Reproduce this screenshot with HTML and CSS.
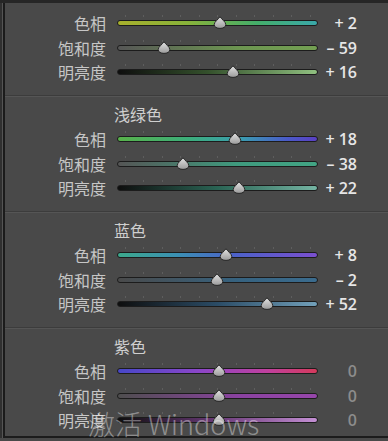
FILE: index.html
```html
<!DOCTYPE html>
<html lang="zh-CN">
<head>
    <meta charset="UTF-8">
    <title>HSL</title>
    <link rel="stylesheet" href="styles.css">
</head>
<body>
    <svg class="defs" width="0" height="0">
        <defs>
            <linearGradient id="knob" x1="0" y1="0" x2="0" y2="1">
                <stop offset="0" stop-color="#e4e4e4"/>
                <stop offset="1" stop-color="#9a9a9a"/>
            </linearGradient>
            <symbol id="thumb" viewBox="0 0 14 13">
                <path d="M7 0.6 C8.2 3.2 12.8 5.6 12.8 8.6 C12.8 11 10.2 12.4 7 12.4 C3.8 12.4 1.2 11 1.2 8.6 C1.2 5.6 5.8 3.2 7 0.6 Z" fill="url(#knob)" stroke="#262626" stroke-width="1"/>
            </symbol>
        </defs>
    </svg>

    <div class="frame">
        <div class="panel">
            <!-- 绿色 -->
            <section class="group first">
                <div class="row">
                    <span class="label">色相</span>
                    <div class="track g-hue"><svg class="thumb" style="--v: 2"><use href="#thumb"/></svg></div>
                    <span class="value">+ 2</span>
                </div>
                <div class="row">
                    <span class="label">饱和度</span>
                    <div class="track g-sat"><svg class="thumb" style="--v: -59"><use href="#thumb"/></svg></div>
                    <span class="value">– 59</span>
                </div>
                <div class="row">
                    <span class="label">明亮度</span>
                    <div class="track g-lum"><svg class="thumb" style="--v: 16"><use href="#thumb"/></svg></div>
                    <span class="value">+ 16</span>
                </div>
            </section>

            <!-- 浅绿色 -->
            <section class="group">
                <div class="title">浅绿色</div>
                <div class="row">
                    <span class="label">色相</span>
                    <div class="track a-hue"><svg class="thumb" style="--v: 18"><use href="#thumb"/></svg></div>
                    <span class="value">+ 18</span>
                </div>
                <div class="row">
                    <span class="label">饱和度</span>
                    <div class="track a-sat"><svg class="thumb" style="--v: -38"><use href="#thumb"/></svg></div>
                    <span class="value">– 38</span>
                </div>
                <div class="row">
                    <span class="label">明亮度</span>
                    <div class="track a-lum"><svg class="thumb" style="--v: 22"><use href="#thumb"/></svg></div>
                    <span class="value">+ 22</span>
                </div>
            </section>

            <!-- 蓝色 -->
            <section class="group">
                <div class="title">蓝色</div>
                <div class="row">
                    <span class="label">色相</span>
                    <div class="track b-hue"><svg class="thumb" style="--v: 8"><use href="#thumb"/></svg></div>
                    <span class="value">+ 8</span>
                </div>
                <div class="row">
                    <span class="label">饱和度</span>
                    <div class="track b-sat"><svg class="thumb" style="--v: -2"><use href="#thumb"/></svg></div>
                    <span class="value">– 2</span>
                </div>
                <div class="row">
                    <span class="label">明亮度</span>
                    <div class="track b-lum"><svg class="thumb" style="--v: 52"><use href="#thumb"/></svg></div>
                    <span class="value">+ 52</span>
                </div>
            </section>

            <!-- 紫色 -->
            <section class="group">
                <div class="title">紫色</div>
                <div class="row">
                    <span class="label">色相</span>
                    <div class="track p-hue"><svg class="thumb" style="--v: 0"><use href="#thumb"/></svg></div>
                    <span class="value zero">0</span>
                </div>
                <div class="row">
                    <span class="label">饱和度</span>
                    <div class="track p-sat"><svg class="thumb" style="--v: 0"><use href="#thumb"/></svg></div>
                    <span class="value zero">0</span>
                </div>
                <div class="row">
                    <span class="label">明亮度</span>
                    <div class="track p-lum"><svg class="thumb" style="--v: 0"><use href="#thumb"/></svg></div>
                    <span class="value zero">0</span>
                </div>
            </section>
        </div>

        <div class="watermark">激活 Windows</div>
    </div>
</body>
</html>
```

FILE: styles.css
```css
body {
    margin: 0;
    background-color: #494949;
    font-family: "Noto Sans CJK SC", "Noto Sans", sans-serif;
    overflow: hidden;
}

.defs {
    position: absolute;
}

.frame {
    position: relative;
    width: 388px;
    height: 441px;
    overflow: hidden;
    border-top: 3px solid #262626;
    box-sizing: border-box;
}

.panel {
    height: 433px;
    margin-left: 5px;
    box-shadow: -2px 0 0 #1b1b1b, -3px 0 0 #545454, -5px 0 0 #303030;
    border-bottom: 2px solid #1c1c1c;
    overflow: hidden;
}

.group {
    padding: 6px 0 11px;
    border-top: 1px solid #3c3c3c;
    box-shadow: inset 0 1px 0 #555555;
}

.group.first {
    padding-top: 7.75px;
    border-top: none;
    box-shadow: none;
}

.title {
    height: 24.5px;
    line-height: 24.5px;
    margin-left: 109px;
    font-size: 16px;
    color: #cfcfcf;
}

.row {
    display: grid;
    grid-template-columns: 101px 201px 50px;
    align-items: center;
    height: 24.5px;
}

.label {
    font-size: 16px;
    color: #c6c6c6;
    text-align: right;
}

.track {
    margin-left: 11px;
    margin-right: -11px;
    position: relative;
    height: 4px;
    border: 1px solid #1c1c1c;
    border-radius: 3px;
}

.track::before {
    content: "";
    position: absolute;
    left: 7px;
    top: -6px;
    width: 187px;
    height: 2px;
    background: repeating-linear-gradient(to right, #5e5e5e 0 1px, transparent 1px 18.5px);
}

.thumb {
    position: absolute;
    width: 14px;
    height: 13px;
    top: -5px;
    left: calc(1px + (var(--v) + 100) * 0.925px);
}

.value {
    margin-left: 11px;
    text-align: right;
    font-family: "Open Sans", sans-serif;
    font-weight: 600;
    font-size: 16px;
    color: #e6e6e6;
}

.value.zero {
    color: #8c8c8c;
}

/* 绿色 */
.g-hue { background: linear-gradient(to right, #a8b02c, #88b23a 35%, #44ad6a 70%, #3aa8aa); }
.g-sat { background: linear-gradient(to right, #565656, #6c9550 60%, #73a052); }
.g-lum { background: linear-gradient(to right, #0e0e0e, #34502c 45%, #90c080); }

/* 浅绿色 */
.a-hue { background: linear-gradient(to right, #58b24a, #3cae7a 35%, #3a9cb0 62%, #4a5ac8 85%, #5a40c2); }
.a-sat { background: linear-gradient(to right, #555555, #3f9a7e 60%, #42a484); }
.a-lum { background: linear-gradient(to right, #0e0e0e, #2a6454 50%, #74b4a2); }

/* 蓝色 */
.b-hue { background: linear-gradient(to right, #3ca98c, #3b90b4 30%, #4c62c8 58%, #7a4fcf); }
.b-sat { background: linear-gradient(to right, #4a4a4a, #36627f 60%, #3b6c8e); }
.b-lum { background: linear-gradient(to right, #0e0e0e, #2b4c66 50%, #72a0ba); }

/* 紫色 */
.p-hue { background: linear-gradient(to right, #4747c8, #8a46c8 40%, #c0409e 75%, #d43a5c); }
.p-sat { background: linear-gradient(to right, #4e4e4e, #8a42a0 60%, #9646aa); }
.p-lum { background: linear-gradient(to right, #0e0e0e, #6a3a78 50%, #c490d4); }

.watermark {
    position: absolute;
    left: 88px;
    top: 401px;
    font-family: "Noto Sans CJK SC", "Noto Sans", sans-serif;
    font-weight: 300;
    font-size: 27px;
    color: rgba(255, 255, 255, 0.4);
    white-space: nowrap;
}
```
